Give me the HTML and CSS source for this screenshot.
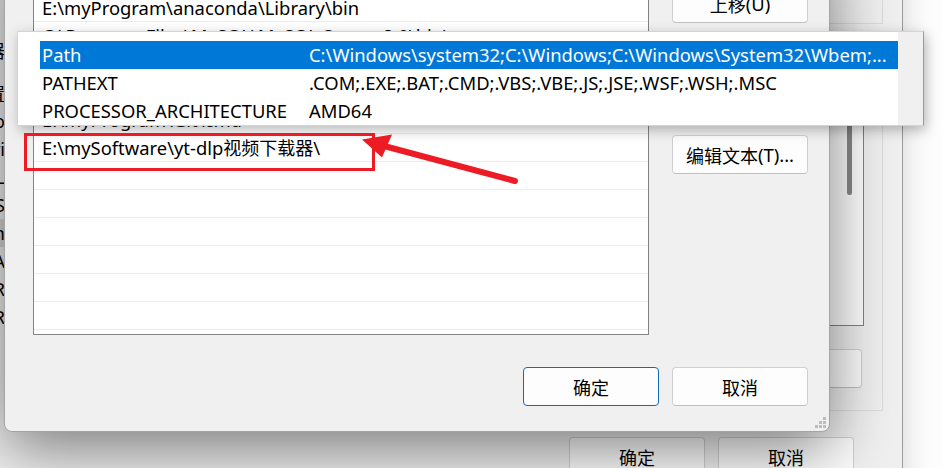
FILE: index.html
```html
<!DOCTYPE html>
<html lang="zh-CN">
<head>
<meta charset="utf-8">
<title>编辑环境变量</title>
<link rel="stylesheet" href="styles.css">
</head>
<body>
<div class="desk">
  <div class="parent">
    <div class="gb gb1"></div>
    <div class="gb gb2">
      <div class="plist">
        <div class="plist-rows"></div>
        <div class="pscroll"><div class="pthumb"></div></div>
      </div>
      <div class="pbtnrow"><button class="btn"><span class="cjk">删除</span>(L)</button></div>
    </div>
    <div class="pfooter">
      <button class="btn"><span class="cjk">确定</span></button>
      <button class="btn"><span class="cjk">取消</span></button>
    </div>
  </div>

  <div class="leftwin">
    <div class="lw-row"><span class="cjk">下载器</span></div>
    <div class="lw-row lw-gap"><span class="cjk">位置</span></div>
    <div class="lw-row">Go</div>
    <div class="lw-row">Pri</div>
    <div class="lw-row">_L</div>
    <div class="lw-row">OS</div>
    <div class="lw-row lw-sel">Win</div>
    <div class="lw-row">DATA</div>
    <div class="lw-row">PR</div>
    <div class="lw-row">USR</div>
  </div>

  <div class="dialog">
    <div class="dmain">
      <div class="dlist">
        <div class="drow">C:\Windows\System32\OpenSSH\</div>
        <div class="drow">E:\myProgram\anaconda\Library\bin</div>
        <div class="drow">C:\Program Files\MySQL\MySQL Server 8.0\bin\</div>
        <div class="drow">E:\myProgram\anaconda\Scripts</div>
        <div class="drow">E:\myProgram\nodejs\</div>
        <div class="drow">E:\myProgram\Git\cmd</div>
        <div class="drow">E:\mySoftware\yt-dlp<span class="cjk">视频下载器</span>\</div>
        <div class="drow"></div>
        <div class="drow"></div>
        <div class="drow"></div>
        <div class="drow"></div>
        <div class="drow"></div>
        <div class="drow"></div>
        <div class="drow"></div>
      </div>
      <div class="dbtns">
        <button class="btn"><span class="cjk">上移</span>(U)</button>
        <button class="btn btn-down"><span class="cjk">下移</span>(O)</button>
        <button class="btn btn-edit"><span class="cjk">编辑文本</span>(T)...</button>
      </div>
    </div>
    <div class="dfooter">
      <button class="btn btn-primary"><span class="cjk">确定</span></button>
      <button class="btn"><span class="cjk">取消</span></button>
    </div>
    <svg class="grip" width="12" height="12" viewBox="0 0 12 12">
      <rect x="8" y="0" width="3" height="3"/>
      <rect x="4" y="4" width="3" height="3"/>
      <rect x="8" y="4" width="3" height="3"/>
      <rect x="0" y="8" width="3" height="3"/>
      <rect x="4" y="8" width="3" height="3"/>
      <rect x="8" y="8" width="3" height="3"/>
    </svg>
  </div>

  <div class="popup">
    <div class="popup-list">
      <div class="prow sel"><span class="pname">Path</span><span class="pval">C:\Windows\system32;C:\Windows;C:\Windows\System32\Wbem;...</span></div>
      <div class="prow"><span class="pname">PATHEXT</span><span class="pval">.COM;.EXE;.BAT;.CMD;.VBS;.VBE;.JS;.JSE;.WSF;.WSH;.MSC</span></div>
      <div class="prow"><span class="pname">PROCESSOR_ARCHITECTURE</span><span class="pval">AMD64</span></div>
    </div>
    <div class="popup-gutter"></div>
  </div>

  <svg class="annot" width="943" height="468" viewBox="0 0 943 468">
    <rect x="25.5" y="134.5" width="348" height="35" fill="none" stroke="#ed1c24" stroke-width="3"/>
    <line x1="515" y1="181" x2="386" y2="146.5" stroke="#ed1c24" stroke-width="6" stroke-linecap="round"/>
    <polygon points="362,139.5 392,134.5 382,157.5" fill="#ed1c24"/>
  </svg>
</div>
</body>
</html>
```

FILE: styles.css
```css
* { box-sizing: border-box; margin: 0; padding: 0; }
html, body { width: 943px; height: 468px; overflow: hidden; }
body {
  background: #fdfdfd;
  font-family: "Noto Sans", "Noto Sans CJK SC", sans-serif;
  font-size: 18.4px;
  color: #000;
}
.cjk { font-family: "Noto Sans CJK SC", sans-serif; font-size: 18px; }

.desk { position: relative; width: 943px; height: 468px; overflow: hidden; background: #fdfdfd; }

.btn {
  font: inherit;
  color: #000;
  width: 136px;
  height: 39px;
  background: #fdfdfd;
  border: 1px solid #d0d0d0;
  border-bottom-color: #c0c0c0;
  border-radius: 4px;
  display: flex;
  align-items: center;
  justify-content: center;
  white-space: nowrap;
  flex: none;
}
.btn-primary { border: 1px solid #0f6cbd; }

/* parent window behind */
.parent {
  position: absolute;
  left: 0;
  top: -120px;
  width: 903px;
  height: 640px;
  background: #f0f0f0;
  border-right: 1px solid #9c9c9c;
  box-shadow: 0 0 30px rgba(0, 0, 0, 0.16);
  padding: 0 19px 0 20px;
  display: flex;
  flex-direction: column;
  z-index: 1;
}
.gb { border: 1px solid #dcdcdc; }
.gb1 { height: 144px; border-top: none; }
.gb2 {
  margin-top: 21px;
  height: 366px;
  padding: 30px 18px 0 20px;
  display: flex;
  flex-direction: column;
}
.plist {
  height: 250px;
  background: #fff;
  border: 1px solid #828282;
  display: flex;
}
.plist-rows { flex: 1; }
.pscroll { width: 17px; padding-left: 1px; padding-top: 5px; }
.pthumb { width: 5px; height: 113px; background: #8a8a8a; border-radius: 3px; }
.pbtnrow { margin-top: 23px; display: flex; justify-content: flex-end; padding-right: 2px; }
.pfooter { margin-top: 26px; display: flex; justify-content: flex-end; gap: 13px; padding-right: 29px; }

/* window strip at far left */
.leftwin {
  position: absolute;
  left: -195px;
  top: 0;
  width: 200px;
  height: 330px;
  background: #eeeeee;
  padding-top: 36px;
  z-index: 2;
  font-size: 18px;
}
.lw-row { height: 28px; line-height: 28px; text-align: right; white-space: nowrap; }
.lw-gap { margin-top: 15px; }
.lw-sel { background: #d6d6d6; }

/* front dialog */
.dialog {
  position: absolute;
  left: 4px;
  top: -60px;
  width: 826px;
  height: 492px;
  background: #f0f0f0;
  border: 1px solid #a4a4a4;
  border-radius: 0 0 8px 8px;
  box-shadow: 0 16px 64px rgba(0, 0, 0, 0.5);
  padding: 24px 21px 25px 28px;
  display: flex;
  flex-direction: column;
  z-index: 3;
}
.dmain { display: flex; gap: 23px; height: 370px; }
.dlist {
  width: 616px;
  height: 370px;
  border: 1px solid #838383;
  background: #fff;
  overflow: hidden;
  flex: none;
}
.drow {
  height: 28px;
  border-bottom: 1px solid #ececec;
  padding-left: 8px;
  line-height: 27px;
  white-space: nowrap;
  overflow: hidden;
}
.dbtns { display: flex; flex-direction: column; padding-top: 19px; }
.btn-down { margin-top: 10px; }
.btn-edit { margin-top: 63px; }
.dfooter { margin-top: 32px; display: flex; justify-content: flex-end; gap: 13px; }
.grip { position: absolute; right: 2px; bottom: 2px; fill: #bdbdbd; }

/* autocomplete popup */
.popup {
  position: absolute;
  left: 17px;
  top: 31px;
  width: 907px;
  height: 95px;
  background: #fff;
  border: 1px solid #d4d4d4;
  border-right-color: #9a9a9a;
  box-shadow: 2px 4px 12px rgba(0, 0, 0, 0.28);
  display: flex;
  z-index: 4;
}
.popup-list { flex: 1; min-width: 0; padding: 9px 0 0 22px; }
.popup-gutter { width: 25px; flex: none; background: #f0f0f0; }
.prow { display: flex; height: 28px; line-height: 28px; padding-left: 2px; white-space: nowrap; }
.prow.sel { background: #0078d7; color: #fff; }
.pname { width: 267px; flex: none; }
.pval { overflow: hidden; min-width: 0; }

.annot { position: absolute; left: 0; top: 0; z-index: 5; pointer-events: none; }
```
